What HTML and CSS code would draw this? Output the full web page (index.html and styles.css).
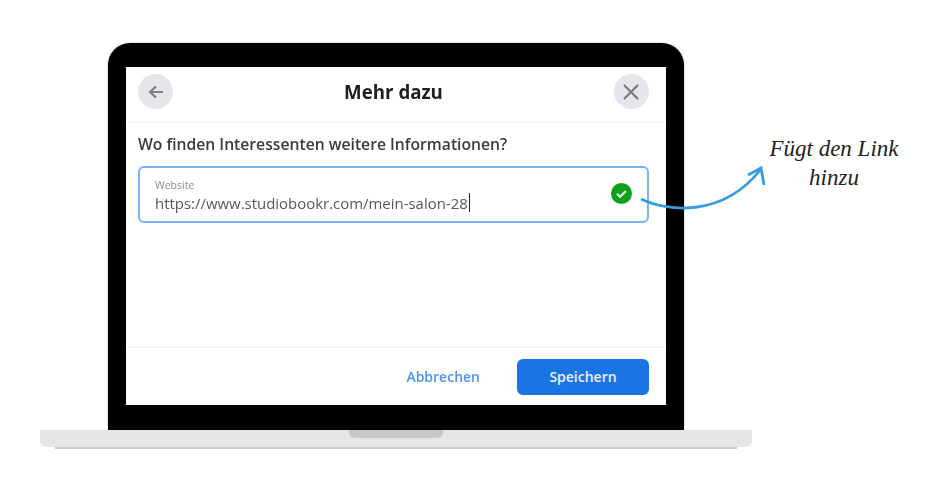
FILE: index.html
```html
<!DOCTYPE html>
<html lang="de">
  <head>
    <title>Mehr dazu</title>
    <meta charset="UTF-8">
    <link rel="stylesheet" href="styles.css">
  </head>
  <body>
    <div class="page">
      <div class="laptop">
        <div class="lid">
          <div class="screen">
            <div class="dialog-head">
              <div class="round-btn">
                <svg width="18" height="18" viewBox="0 0 18 18"><path d="M16 9H3M9 3.500 3 9l6 5.500" fill="none" stroke="#7d7f83" stroke-width="2.200"/></svg>
              </div>
              <div class="dialog-title">Mehr dazu</div>
              <div class="round-btn">
                <svg width="18" height="18" viewBox="0 0 18 18"><path d="M2 2l14 14M16 2 2 16" fill="none" stroke="#77797d" stroke-width="2.200"/></svg>
              </div>
            </div>
            <div class="dialog-body">
              <div class="question">Wo finden Interessenten weitere Informationen?</div>
              <div class="field">
                <div class="field-text">
                  <div class="field-label">Website</div>
                  <div class="field-value">https://www.studiobookr.com/mein-salon-28<span class="caret"></span></div>
                </div>
                <svg class="field-check" width="21" height="21" viewBox="0 0 21 21"><circle cx="10.500" cy="10.500" r="10.500" fill="#0fa01a"/><path d="M6 10.800l3 2.900 6-5.700" fill="none" stroke="#e8f6e8" stroke-width="2.200"/></svg>
              </div>
            </div>
            <div class="dialog-foot">
              <div class="cancel">Abbrechen</div>
              <div class="save">Speichern</div>
            </div>
          </div>
        </div>
        <div class="base"><div class="notch"></div></div>
        <div class="base-shadow"></div>
      </div>

      <svg class="arrow" width="940" height="492" viewBox="0 0 940 492">
        <path d="M641 199C666 211 722 219 761 169M748 175 761 168 764 185" fill="none" stroke="#3a9ade" stroke-width="2.800"/>
      </svg>
      <div class="note">Fügt den Link<br>hinzu</div>
    </div>
  </body>
</html>
```

FILE: styles.css
```css
*{
   box-sizing: border-box;
}
body{
   margin: 0;
   background: white;
   font-family: "Open Sans", "Noto Sans", sans-serif;
}
.page{
   position: relative;
   width: 940px;
   height: 492px;
   padding: 43px 0 0 40px;
   overflow: hidden;
}
.laptop{
   width: 712px;
   display: flex;
   flex-direction: column;
   align-items: center;
}

.lid{
   width: 576px;
   height: 387px;
   padding: 24px 18px 25px 18px;
   background: black;
   border-radius: 22px 22px 0 0;
   box-shadow: 0 0 0 1px #e4e4e4;
}
.screen{
   height: 338px;
   display: flex;
   flex-direction: column;
   background: white;
}
.base{
   width: 712px;
   height: 17px;
   display: flex;
   justify-content: center;
   background: #e6e6e6;
   border-radius: 0 0 6px 6px;
}
.notch{
   width: 94px;
   height: 8px;
   background: #c8c8c8;
   border-radius: 0 0 6px 6px;
}
.base-shadow{
   width: 682px;
   height: 2px;
   background: #c9c9c9;
}

.dialog-head{
   height: 56px;
   flex: none;
   display: flex;
   align-items: center;
   justify-content: space-between;
   padding: 0 17px 6px 12px;
   border-bottom: 1px solid #efefef;
}
.round-btn{
   width: 35px;
   height: 35px;
   display: flex;
   align-items: center;
   justify-content: center;
   background: #e4e6eb;
   border-radius: 50%;
}
.dialog-title{
   font-size: 18.700px;
   font-weight: 700;
   color: #1c1e21;
   filter: blur(0.4px);
}

.dialog-body{
   flex: 1;
   padding: 11px 17px 0 12px;
}
.question{
   font-size: 15.700px;
   line-height: 21px;
   font-weight: 600;
   color: #3a3b3d;
   filter: blur(0.4px);
}
.field{
   height: 57px;
   margin-top: 11px;
   display: flex;
   align-items: center;
   justify-content: space-between;
   padding: 0 15px;
   border: 2px solid #7cb2f5;
   border-radius: 6px;
}
.field-text{
   padding-top: 1px;
}
.field-label{
   font-size: 10.500px;
   line-height: 14px;
   color: #8a8d91;
   filter: blur(0.4px);
}
.field-value{
   font-size: 14.950px;
   line-height: 20px;
   margin-top: 1px;
   color: #55585c;
   white-space: nowrap;
   filter: blur(0.4px);
}
.caret{
   display: inline-block;
   width: 1px;
   height: 19px;
   margin-left: 1px;
   vertical-align: top;
   background: #222;
}
.field-check{
   margin-top: -3px;
}

.dialog-foot{
   height: 58px;
   flex: none;
   display: flex;
   align-items: center;
   justify-content: flex-end;
   gap: 37px;
   padding: 0 17px 0 0;
   border-top: 1px solid #efefef;
}
.cancel{
   font-size: 14px;
   font-weight: 600;
   color: #4b93f0;
   filter: blur(0.4px);
}
.save{
   width: 132px;
   height: 36px;
   display: flex;
   align-items: center;
   justify-content: center;
   font-size: 14px;
   font-weight: 600;
   color: #e9f2fd;
   background: #1b74e4;
   border-radius: 6px;
}

.arrow{
   position: absolute;
   top: 0;
   left: 0;
}
.note{
   position: absolute;
   top: 134px;
   left: 764px;
   width: 140px;
   text-align: center;
   white-space: nowrap;
   font-family: "Liberation Serif", serif;
   font-style: italic;
   font-size: 23px;
   line-height: 29px;
   color: #222;
}
```
